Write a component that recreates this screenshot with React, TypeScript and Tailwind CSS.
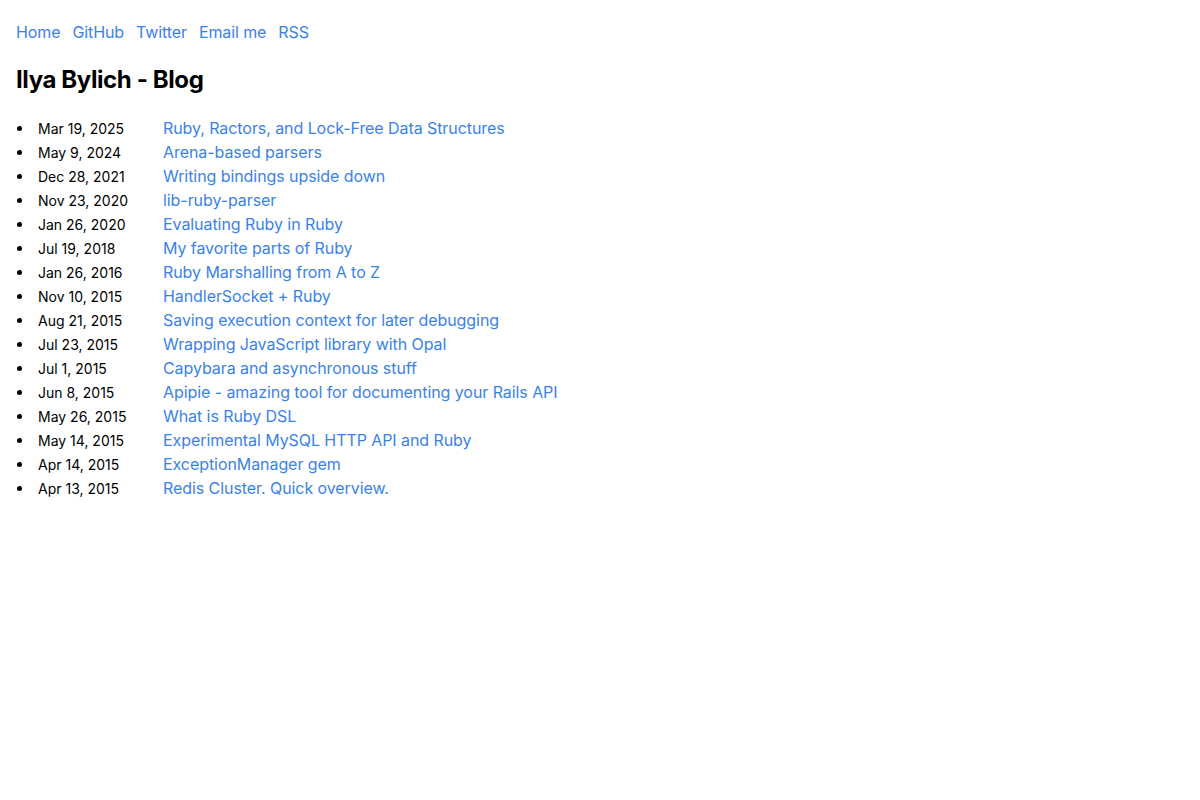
import React from 'react'

const nav = ['Home', 'GitHub', 'Twitter', 'Email me', 'RSS']

const posts: [string, string][] = [
  ['Mar 19, 2025', 'Ruby, Ractors, and Lock-Free Data Structures'],
  ['May 9, 2024', 'Arena-based parsers'],
  ['Dec 28, 2021', 'Writing bindings upside down'],
  ['Nov 23, 2020', 'lib-ruby-parser'],
  ['Jan 26, 2020', 'Evaluating Ruby in Ruby'],
  ['Jul 19, 2018', 'My favorite parts of Ruby'],
  ['Jan 26, 2016', 'Ruby Marshalling from A to Z'],
  ['Nov 10, 2015', 'HandlerSocket + Ruby'],
  ['Aug 21, 2015', 'Saving execution context for later debugging'],
  ['Jul 23, 2015', 'Wrapping JavaScript library with Opal'],
  ['Jul 1, 2015', 'Capybara and asynchronous stuff'],
  ['Jun 8, 2015', 'Apipie - amazing tool for documenting your Rails API'],
  ['May 26, 2015', 'What is Ruby DSL'],
  ['May 14, 2015', 'Experimental MySQL HTTP API and Ruby'],
  ['Apr 14, 2015', 'ExceptionManager gem'],
  ['Apr 13, 2015', 'Redis Cluster. Quick overview.'],
]

export default function App() {
  return (
    <div className="min-h-screen bg-white px-4 pt-[20px] font-['Inter',sans-serif] text-black">
      <nav className="flex gap-3 text-base leading-6 tracking-[-0.1px]">
        {nav.map((item) => (
          <a key={item} href="#" className="text-[#3b82e6]">
            {item}
          </a>
        ))}
      </nav>

      <h1 className="mt-[21px] text-2xl font-bold leading-[30px] tracking-[-0.4px]">Ilya Bylich - Blog</h1>

      <ul className="mt-[21px]">
        {posts.map(([date, title]) => (
          <li key={title} className="flex h-6 items-center">
            {/* bullet */}
            <span className="ml-[0.5px] h-[5px] w-[5px] shrink-0 rounded-full bg-black" />
            <div className="ml-[16.5px] flex items-baseline">
              <span className="w-[125px] shrink-0 text-sm leading-6">{date}</span>
              <a href="#" className="text-base leading-6 tracking-[-0.07px] text-[#3b82e6]">
                {title}
              </a>
            </div>
          </li>
        ))}
      </ul>
    </div>
  )
}
